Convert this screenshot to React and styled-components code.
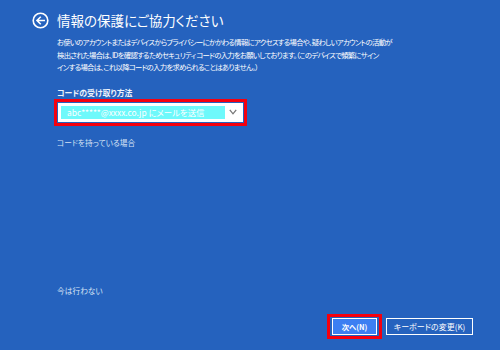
import styled, { createGlobalStyle } from 'styled-components';

const GlobalStyle = createGlobalStyle`
  html, body {
    margin: 0;
    padding: 0;
    background: #2562be;
  }
  * {
    box-sizing: border-box;
  }
`;

const Page = styled.div`
  width: 500px;
  height: 350px;
  background: #2562be;
  color: #fff;
  font-family: "Noto Sans CJK JP", "Noto Sans", sans-serif;
  font-feature-settings: "palt";
  display: flex;
  flex-direction: column;
  padding: 11px 27px 11px 32px;
  overflow: hidden;
`;

const Header = styled.div`
  display: flex;
  align-items: center;
  gap: 8px;
  height: 18px;
`;

const BackButton = styled.button`
  width: 17px;
  height: 17px;
  padding: 0;
  border: none;
  background: none;
  display: flex;
  cursor: pointer;
`;

const Title = styled.h1`
  margin: 0;
  font-size: 13.5px;
  font-weight: 400;
  line-height: 18px;
`;

const Content = styled.div`
  display: flex;
  flex-direction: column;
  padding-left: 25px;
  flex: 1;
`;

const Description = styled.p`
  margin: 7px 0 0;
  font-size: 7.4px;
  letter-spacing: -0.75px;
  line-height: 12.5px;
  white-space: nowrap;
`;

const Label = styled.div`
  margin-top: 13px;
  font-size: 7.9px;
  font-weight: 700;
  line-height: 12px;
  color: #eef3fb;
`;

const Highlight = styled.div`
  display: inline-flex;
  align-self: flex-start;
  border: 3px solid #f5000e;
  padding: ${p => p.$gap || '1px'};
  margin-left: ${p => p.$shift || '0'};
`;

const Select = styled.div`
  width: 185px;
  height: 19px;
  background: #fff;
  display: flex;
  align-items: center;
  padding: 3px;
  gap: 4px;
`;

const SelectValue = styled.div`
  flex: 1;
  height: 13px;
  background: #6ef9fb;
  color: #fff;
  font-size: 8.4px;
  line-height: 13px;
  padding-left: 6px;
  white-space: nowrap;
`;

const Chevron = styled.svg`
  width: 8px;
  height: 6px;
  margin-right: 3px;
`;

const LinkText = styled.a`
  font-size: 7.7px;
  line-height: 12px;
  color: #d7e3f5;
  text-decoration: none;
  margin-top: ${p => p.$top || '0'};
  cursor: pointer;
`;

const Spacer = styled.div`
  flex: 1;
`;

const Footer = styled.div`
  display: flex;
  justify-content: flex-end;
  align-items: center;
  gap: 4px;
  margin-top: 17px;
`;

const Button = styled.button`
  height: 17px;
  border: 1px solid #fff;
  background: ${p => (p.$primary ? '#3c7ff2' : 'transparent')};
  color: #fff;
  font-family: inherit;
  font-feature-settings: "palt";
  font-size: ${p => (p.$primary ? '7.4px' : '8px')};
  font-weight: ${p => (p.$primary ? 700 : 400)};
  padding: 0;
  width: ${p => p.$width};
  display: flex;
  align-items: center;
  justify-content: center;
  cursor: pointer;
`;

const BackIcon = () => (
  <svg width="17" height="17" viewBox="0 0 17 17" fill="none">
    <circle cx="8.5" cy="8.5" r="7.3" stroke="#fff" strokeWidth="1.6" />
    <path d="M12.2 8.5H5.2M8.2 5.3L5 8.5l3.2 3.2" stroke="#fff" strokeWidth="1.6" strokeLinecap="square" />
  </svg>
);

export default function App() {
  return (
    <>
      <GlobalStyle />
      <Page>
        <Header>
          <BackButton aria-label="戻る">
            <BackIcon />
          </BackButton>
          <Title>情報の保護にご協力ください</Title>
        </Header>
        <Content>
          <Description>
            お使いのアカウントまたはデバイスからプライバシーにかかわる情報にアクセスする場合や、疑わしいアカウントの活動が
            <br />
            検出された場合は、IDを確認するためセキュリティ コードの入力をお願いしております。（このデバイスで頻繁にサイン
            <br />
            インする場合は、これ以降コードの入力を求められることはありません。）
          </Description>
          <Label>コードの受け取り方法</Label>
          <Highlight $shift="-3px">
            <Select>
              <SelectValue>abc*****@xxxx.co.jp にメールを送信</SelectValue>
              <Chevron viewBox="0 0 8 6">
                <path d="M0.8 0.8l3.2 4L7.2 0.8" stroke="#777" strokeWidth="1.3" fill="none" />
              </Chevron>
            </Select>
          </Highlight>
          <LinkText $top="11px">コードを持っている場合</LinkText>
          <Spacer />
          <LinkText>今は行わない</LinkText>
        </Content>
        <Footer>
          <Highlight $gap="1px 2px">
            <Button $primary $width="45px">次へ(N)</Button>
          </Highlight>
          <Button $width="87px">キーボードの変更(K)</Button>
        </Footer>
      </Page>
    </>
  );
}
